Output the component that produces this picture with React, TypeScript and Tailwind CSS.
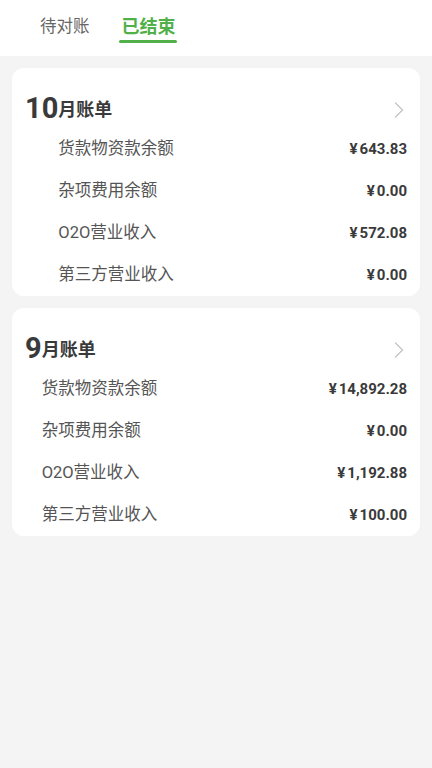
import { ChevronRight } from "lucide-react";

type Row = { label: string; amount: string };
type Bill = { month: string; rows: Row[] };

const bills: Bill[] = [
  {
    month: "10",
    rows: [
      { label: "货款物资款余额", amount: "643.83" },
      { label: "杂项费用余额", amount: "0.00" },
      { label: "O2O营业收入", amount: "572.08" },
      { label: "第三方营业收入", amount: "0.00" },
    ],
  },
  {
    month: "9",
    rows: [
      { label: "货款物资款余额", amount: "14,892.28" },
      { label: "杂项费用余额", amount: "0.00" },
      { label: "O2O营业收入", amount: "1,192.88" },
      { label: "第三方营业收入", amount: "100.00" },
    ],
  },
];

function BillCard({ bill }: { bill: Bill }) {
  return (
    <div className="flex rounded-[12px] bg-white pl-[13px] pr-[13px] pt-[23px]">
      <div className="mt-[3px] text-[29px] font-bold leading-none text-[#3a3a3a]">
        {bill.month}
      </div>
      <div className="flex flex-1 flex-col">
        {/* header */}
        <div className="flex h-[37px] items-center justify-between">
          <span className="text-[18px] font-bold text-[#3a3a3a]">月账单</span>
          <ChevronRight className="-mr-[6px] h-[28px] w-[28px] text-[#c4c4c4]" strokeWidth={1.1} />
        </div>
        {bill.rows.map((r) => (
          <div key={r.label} className="flex h-[42px] items-center justify-between">
            <span className="text-[16.5px] text-[#555555]">{r.label}</span>
            <span className="text-[15px] font-bold text-[#3a3a3a]">
              ¥<span className="ml-[2px]">{r.amount}</span>
            </span>
          </div>
        ))}
      </div>
    </div>
  );
}

export default function App() {
  return (
    <div
      className="min-h-[768px] w-full bg-[#f4f4f4]"
      style={{ fontFamily: '"Roboto", "Noto Sans CJK SC", sans-serif' }}
    >
      {/* Tabs */}
      <div className="flex h-[56px] items-start gap-[29px] bg-white pl-[40px] pt-[14px]">
        <div className="text-[16.5px] leading-[26px] text-[#666666]">待对账</div>
        <div className="flex flex-col items-end">
          <div className="text-[18px] font-bold leading-[26px] text-[#52b04a]">已结束</div>
          <div className="-mr-[1px] h-[3px] w-[58px] rounded-full bg-[#52b04a]" />
        </div>
      </div>

      <div className="flex flex-col gap-[12px] px-[12px] pt-[12px]">
        {bills.map((b) => (
          <BillCard key={b.month} bill={b} />
        ))}
      </div>
    </div>
  );
}
